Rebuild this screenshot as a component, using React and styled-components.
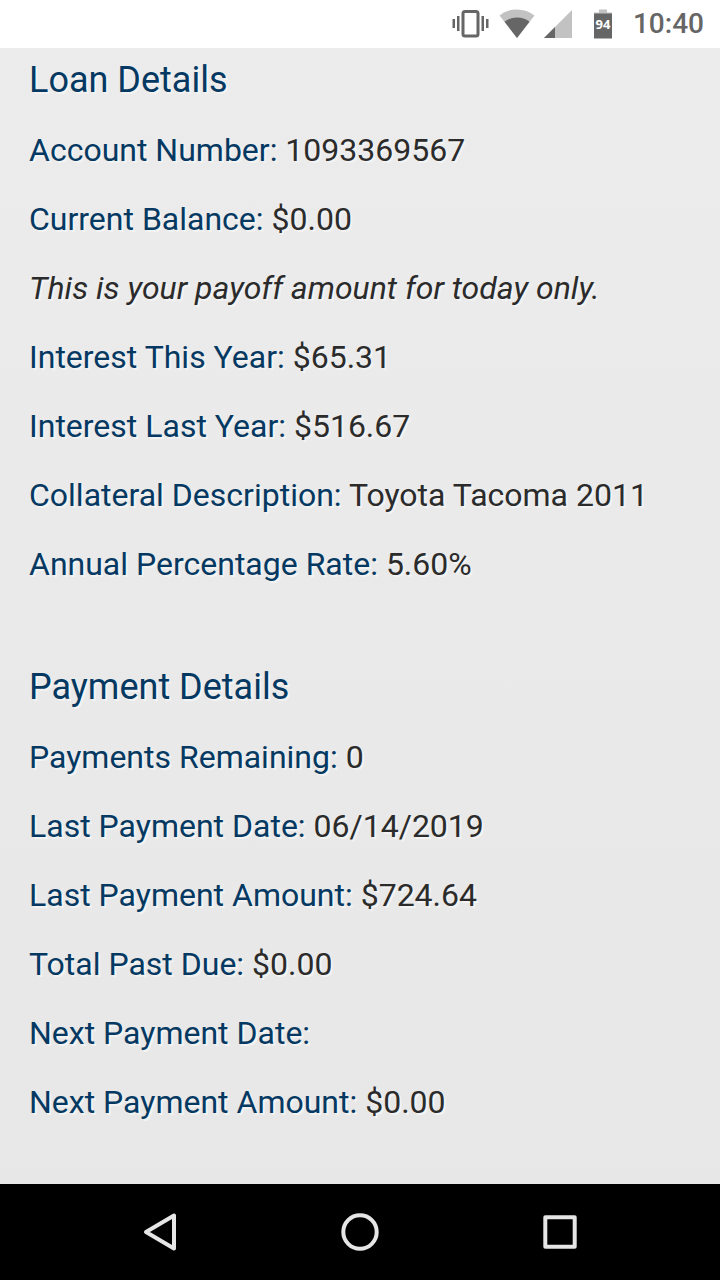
import React from 'react';
import styled, { createGlobalStyle } from 'styled-components';

const GlobalStyle = createGlobalStyle`
  * {
    box-sizing: border-box;
  }

  body {
    margin: 0;
    font-family: Roboto, 'Noto Sans', sans-serif;
  }
`;

const Screen = styled.div`
  display: flex;
  flex-direction: column;
  min-height: 100vh;
  background: linear-gradient(#ececec, #e7e7e7);
`;

const StatusBar = styled.header`
  display: flex;
  align-items: center;
  justify-content: flex-end;
  height: 48px;
  padding: 0 16px;
  background: #fff;
  color: #666;

  svg {
    display: block;
  }
`;

const StatusIcons = styled.div`
  display: flex;
  align-items: center;
  gap: 9px;
`;

const Battery = styled.div`
  margin: 0 20px;
`;

const Clock = styled.time`
  font-size: 28px;
  font-weight: 500;
  line-height: 50px;
`;

const Content = styled.main`
  display: flex;
  flex: 1;
  flex-direction: column;
  gap: 80px;
  padding: 10px 29px 60px;
  color: #2b2b2b;
  font-size: 32px;
  line-height: 41px;
  text-shadow: 2px 2px 0 #f3f3f3;
`;

const Section = styled.section`
  display: flex;
  flex-direction: column;
  gap: 28px;
`;

const Title = styled.h2`
  margin: 0;
  color: #053962;
  font-size: 36px;
  font-weight: 400;
  line-height: 44px;
`;

const Row = styled.p`
  margin: 0;
  font-style: ${(props) => (props.$note ? 'italic' : 'normal')};
`;

const Label = styled.span`
  color: #053962;
`;

const NavBar = styled.nav`
  display: flex;
  align-items: center;
  justify-content: center;
  gap: 104px;
  height: 96px;
  background: #000;
`;

const NavButton = styled.button`
  display: flex;
  align-items: center;
  justify-content: center;
  width: 96px;
  height: 96px;
  padding: 0;
  border: none;
  background: none;
  color: #e6e6e6;
  cursor: pointer;
`;

const loanDetails = [
  { label: 'Account Number:', value: '1093369567' },
  { label: 'Current Balance:', value: '$0.00' },
  { note: 'This is your payoff amount for today only.' },
  { label: 'Interest This Year:', value: '$65.31' },
  { label: 'Interest Last Year:', value: '$516.67' },
  { label: 'Collateral Description:', value: 'Toyota Tacoma 2011' },
  { label: 'Annual Percentage Rate:', value: '5.60%' },
];

const paymentDetails = [
  { label: 'Payments Remaining:', value: '0' },
  { label: 'Last Payment Date:', value: '06/14/2019' },
  { label: 'Last Payment Amount:', value: '$724.64' },
  { label: 'Total Past Due:', value: '$0.00' },
  { label: 'Next Payment Date:', value: '' },
  { label: 'Next Payment Amount:', value: '$0.00' },
];

function Details({ title, rows }) {
  return (
    <Section>
      <Title>{title}</Title>
      {rows.map((row) =>
        row.note ? (
          <Row key={row.note} $note>{row.note}</Row>
        ) : (
          <Row key={row.label}>
            <Label>{row.label}</Label> {row.value}
          </Row>
        )
      )}
    </Section>
  );
}

function VibrateIcon() {
  return (
    <svg width="38" height="30" viewBox="0 0 38 30" fill="currentColor" aria-hidden="true">
      <rect x="11" y="2.5" width="15" height="24.5" rx="2" fill="none" stroke="currentColor" strokeWidth="3" />
      <path d="M0.5 10h2.500v9h-2.500zM5 7h2.500v15h-2.500zM29.500 7h2.500v15h-2.500zM34 10h2.500v9h-2.500z" />
    </svg>
  );
}

function WifiIcon() {
  return (
    <svg width="36" height="30" viewBox="0 0 36 30" aria-hidden="true">
      <path d="M18 29L0.5 6.500Q8 0.500 18 0.500t17.5 6z" fill="#c2c2c2" />
      <path d="M18 29L5.5 12.700Q11 8.500 18 8.500t12.500 4.200z" fill="currentColor" />
    </svg>
  );
}

function SignalIcon() {
  return (
    <svg width="29" height="30" viewBox="0 0 29 30" aria-hidden="true">
      <path d="M0 29L28 1v28z" fill="#c2c2c2" />
      <path d="M0 29L11 18v11z" fill="currentColor" />
    </svg>
  );
}

function BatteryIcon() {
  return (
    <svg width="20" height="30" viewBox="0 0 20 30" role="img" aria-label="Battery 94%">
      <path d="M6 0.500h8v3h5v2H1v-2h5z" fill="#c2c2c2" />
      <path d="M1 4.500h18v25H1z" fill="currentColor" />
      <text x="10" y="20" fill="#fff" fontFamily="'Noto Sans', sans-serif" fontSize="13" fontWeight="700" textAnchor="middle">94</text>
    </svg>
  );
}

function App() {
  return (
    <>
      <GlobalStyle />
      <Screen>
        <StatusBar>
          <StatusIcons>
            <VibrateIcon />
            <WifiIcon />
            <SignalIcon />
          </StatusIcons>
          <Battery>
            <BatteryIcon />
          </Battery>
          <Clock>10:40</Clock>
        </StatusBar>
        <Content>
          <Details title="Loan Details" rows={loanDetails} />
          <Details title="Payment Details" rows={paymentDetails} />
        </Content>
        <NavBar>
          <NavButton type="button" aria-label="Back">
            <svg width="40" height="40" viewBox="0 0 40 40" fill="none" stroke="currentColor" strokeWidth="4" strokeLinejoin="round">
              <path d="M34 3.500V36.500L6 20z" />
            </svg>
          </NavButton>
          <NavButton type="button" aria-label="Home">
            <svg width="40" height="40" viewBox="0 0 40 40" fill="none" stroke="currentColor" strokeWidth="4">
              <circle cx="20" cy="20" r="16.700" />
            </svg>
          </NavButton>
          <NavButton type="button" aria-label="Recent apps">
            <svg width="40" height="40" viewBox="0 0 40 40" fill="none" stroke="currentColor" strokeWidth="4" strokeLinejoin="round">
              <rect x="5.300" y="5.300" width="29.400" height="29.400" />
            </svg>
          </NavButton>
        </NavBar>
      </Screen>
    </>
  );
}

export default App;
